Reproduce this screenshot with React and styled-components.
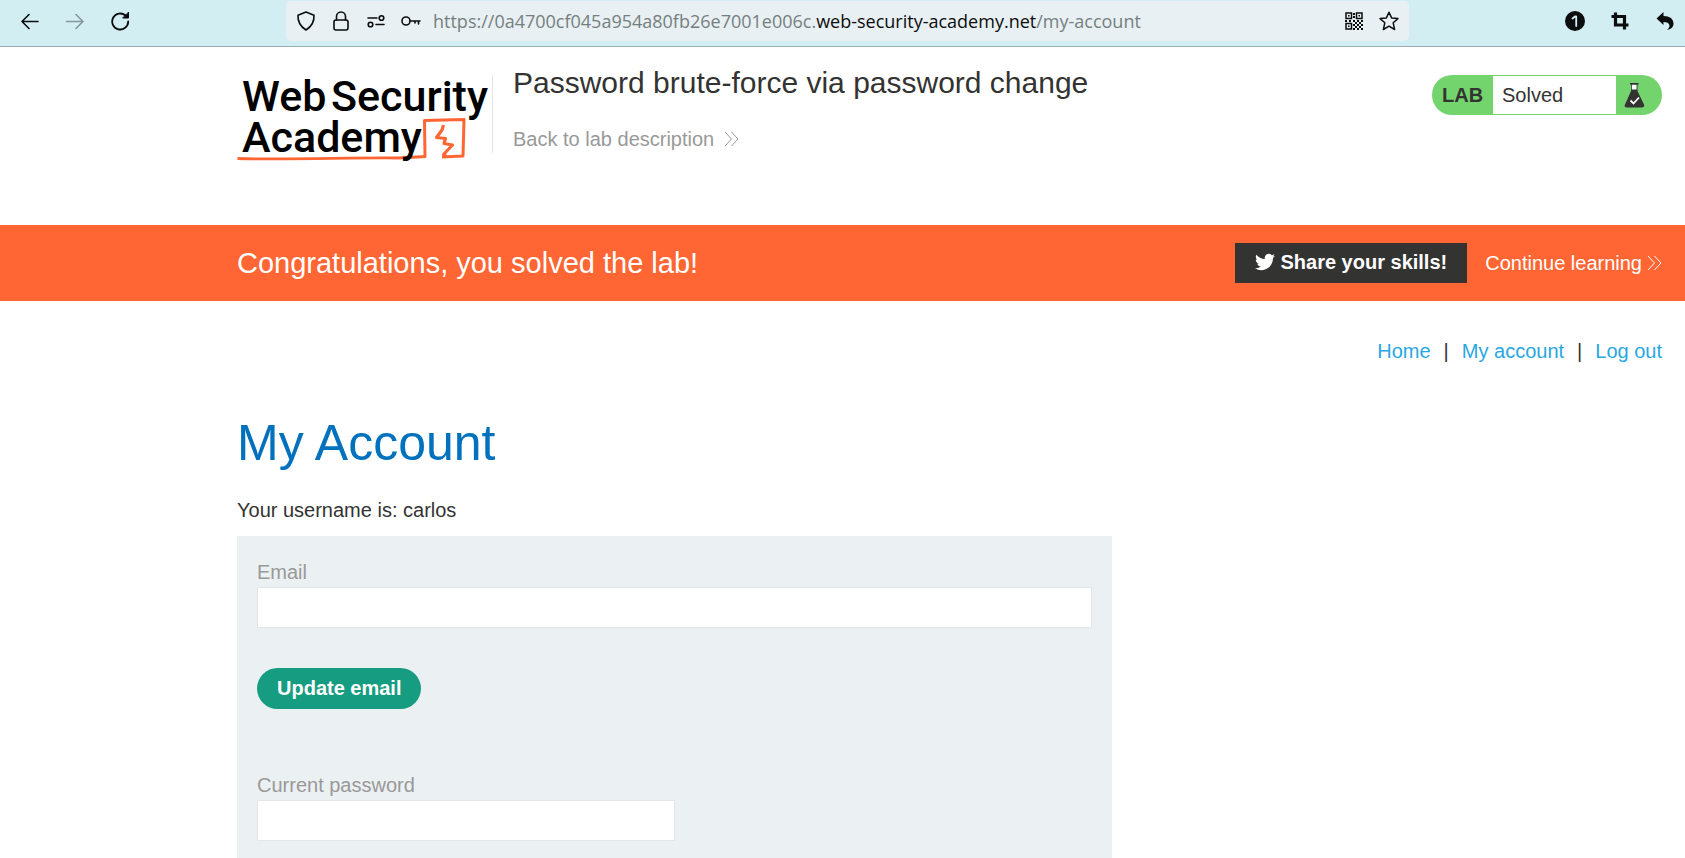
import React from "react";
import styled, { createGlobalStyle } from "styled-components";

const GlobalStyle = createGlobalStyle`
  *, *::before, *::after { box-sizing: border-box; }
  body {
    margin: 0;
    background: #fff;
    color: #333332;
    font-family: "Liberation Sans", Arial, sans-serif;
    font-size: 20px;
    line-height: 24px;
  }
`;

const Page = styled.div`
  display: flex;
  flex-direction: column;
  min-height: 100vh;
`;

/* Browser chrome */
const Toolbar = styled.header`
  display: flex;
  align-items: center;
  gap: 156px;
  height: 47px;
  padding: 0 10px 4px 20px;
  background: #d2eef3;
  border-bottom: 1px solid #9badb3;
`;

const ToolGroup = styled.div`
  display: flex;
  align-items: center;
  gap: ${(p) => (p.$tight ? "15px" : "25px")};
`;

const IconButton = styled.button`
  display: block;
  width: 20px;
  height: 20px;
  padding: 0;
  border: 0;
  background: none;
  color: ${(p) => (p.disabled ? "#84979d" : "#0b0d0e")};

  svg { display: block; }
`;

const AddressBar = styled.div`
  flex: 1;
  min-width: 0;
  display: flex;
  align-items: center;
  gap: 12px;
  height: 40px;
  padding: 0 10px;
  border-radius: 5px;
  background: #e9f0f3;
`;

const Address = styled.div`
  flex: 1;
  min-width: 0;
  overflow: hidden;
  white-space: nowrap;
  font-family: "Open Sans", "Noto Sans", sans-serif;
  font-size: 18px;
  color: #74807f;

  b { font-weight: 400; color: #0b0d0e; }
`;

/* Page sections */
const Section = styled.section`
  padding: 0 23px 0 237px;
`;

const LabHeader = styled(Section)`
  display: flex;
  align-items: flex-start;
  height: 178px;
  padding-top: 20px;
`;

const LogoLink = styled.a`
  display: block;
  width: 255px;
  height: 100px;
  svg { display: block; }
`;

const TitleBlock = styled.div`
  flex: 1;
  margin-top: 8px;
  padding-left: 20px;
  height: 78px;
  border-left: 1px solid #e4e4e4;
`;

const LabTitle = styled.h2`
  margin: -8px 0 0;
  font-size: 30px;
  font-weight: 400;
  line-height: 32px;
`;

const MoreLink = styled.a`
  display: inline-flex;
  align-items: center;
  gap: ${(p) => (p.$light ? "5px" : "10px")};
  color: ${(p) => (p.$light ? "#fff" : "#999")};
  text-decoration: none;
`;

const BackRow = styled.div`
  margin-top: 28px;
`;

const Status = styled.div`
  display: flex;
  width: 230px;
  height: 40px;
  margin-top: 8px;
  border-radius: 20px;
  background: #73d46e;
  line-height: 40px;
  overflow: hidden;
`;

const StatusTag = styled.strong`
  width: 61px;
  padding-left: 10px;
`;

const StatusText = styled.span`
  flex: 1;
  margin: 1px 0;
  padding-left: 9px;
  background: #fff;
  line-height: 38px;
`;

const StatusIcon = styled.span`
  width: 46px;
  padding: 8px;
  svg { display: block; }
`;

const Banner = styled(Section)`
  display: flex;
  align-items: center;
  gap: 18px;
  height: 76px;
  background: #ff6633;
  color: #fff;
`;

const BannerText = styled.p`
  flex: 1;
  margin: 0;
  font-size: 29px;
  line-height: 32px;
`;

const ShareButton = styled.button`
  display: flex;
  align-items: center;
  gap: 5px;
  height: 40px;
  padding: 0 20px 2px;
  border: 0;
  background: #333332;
  color: #fff;
  font: bold 20px/24px "Liberation Sans", Arial, sans-serif;
`;

const Main = styled.main`
  flex: 1;
  display: flex;
  flex-direction: column;
  padding: 38px 23px 0 237px;
`;

const Nav = styled.nav`
  display: flex;
  justify-content: flex-end;
  gap: 13px;

  a { color: #29a7e1; text-decoration: none; }
`;

const Heading = styled.h1`
  margin: 50px 0 0;
  color: #0071bc;
  font-size: 50px;
  font-weight: 400;
  line-height: 60px;
`;

const Username = styled.p`
  margin: 25px 0 14px;
`;

const Panel = styled.div`
  flex: 1;
  display: flex;
  flex-direction: column;
  gap: 64px;
  max-width: 875px;
  padding: 24px 20px 17px;
  background: #ebf0f2;
`;

const Form = styled.form`
  display: flex;
  flex-direction: column;
  align-items: flex-start;
`;

const Label = styled.label`
  margin-bottom: 3px;
  color: #999;
`;

const Input = styled.input`
  width: ${(p) => (p.$half ? "50%" : "100%")};
  height: 41px;
  padding: 0 10px;
  border: 1px solid #e4e6e6;
  border-radius: 0;
  background: #fff;
  font: inherit;
`;

const SubmitButton = styled.button`
  height: 41px;
  margin-top: 40px;
  padding: 0 20px 2px;
  border: 0;
  border-radius: 21px;
  background: #169c80;
  color: #fff;
  font: bold 20px/24px "Liberation Sans", Arial, sans-serif;
`;

const Icon = ({ children, fill = "none", width = 2 }) => (
  <svg width="20" height="20" viewBox="0 0 20 20" fill={fill} aria-hidden="true"
    stroke={fill === "none" ? "currentColor" : "none"} strokeWidth={width}
    strokeLinecap="round" strokeLinejoin="round">{children}</svg>
);

const Chevrons = () => (
  <svg width="15" height="16" viewBox="0 0 15 16" fill="none" stroke="currentColor" strokeWidth="1" aria-hidden="true">
    <path d="M1 1l6.500 7L1 15M7.500 1l6.500 7-6.500 7" />
  </svg>
);

const Logo = () => (
  <svg width="255" height="100" viewBox="237 67 255 100" role="img" aria-label="Web Security Academy">
    <g fill="none" stroke="#ff6633" strokeLinejoin="round">
      <path d="M425 157L424.500 120.500L464 119.500L463 156L442 157" strokeWidth="3" />
      <path d="M443.500 125L442 130L436.500 137.500L445.500 138.500L444 143.500L452.500 145L443.500 154.500L446 156" strokeWidth="3.200" />
      <path d="M237.500 158.500C290 160 350 157.500 398 158L426 156.500" strokeWidth="2.800" />
    </g>
    <g fill="#000" fontFamily="Roboto, sans-serif" fontSize="43" fontWeight="500">
      <text x="242" y="111">Web</text>
      <text x="331" y="111">Security</text>
      <text x="242" y="152">Academy</text>
    </g>
  </svg>
);

const Flask = () => (
  <svg width="21" height="25" viewBox="0 0 21 25" aria-hidden="true">
    <path d="M7 1h6.500v7L20 21.500Q21 24.500 18 24.500H3Q-.5 24.500 1 21.500L7 8z" fill="#333332" />
    <path d="M7.800 1.500h4.800v5H7.800z" fill="#fff" />
    <path d="M6 .7h8.500" stroke="#333332" strokeWidth="1.400" />
    <path d="M6.500 17.500l3 3L15 14.500" fill="none" stroke="#fff" strokeWidth="1.800" />
  </svg>
);

const Bird = () => (
  <svg width="20" height="20" viewBox="0 0 24 24" fill="currentColor" aria-hidden="true">
    <path d="M23.950 4.570a10 10 0 0 1-2.820.770 4.960 4.960 0 0 0 2.160-2.720c-.950.550-2 .950-3.130 1.180a4.920 4.920 0 0 0-8.380 4.480C7.690 8.090 4.070 6.130 1.640 3.160a4.820 4.820 0 0 0-.670 2.480c0 1.710.870 3.210 2.190 4.090a4.900 4.900 0 0 1-2.230-.610v.060c0 2.390 1.700 4.380 3.950 4.830a5 5 0 0 1-2.210.080 4.940 4.940 0 0 0 4.600 3.420A9.870 9.870 0 0 1 0 19.540a13.990 13.990 0 0 0 7.550 2.210c9.050 0 14-7.500 14-13.990 0-.210 0-.420-.020-.630a9.940 9.940 0 0 0 2.460-2.550z" />
  </svg>
);

const QR_DOTS = ["11 11", "15 11", "13 13", "17 13", "11 15", "15 15", "13 17", "17 17", "9 9", "5 9", "1 9", "9 2", "9 5", "13 9", "17 9", "9 13", "9 17"];

export default function App() {
  return (
    <Page>
      <GlobalStyle />
      <Toolbar>
        <ToolGroup>
          <IconButton aria-label="Back"><Icon width={1.6}><path d="M18 10.500H2M9 3.500L2 10.500l7 7" /></Icon></IconButton>
          <IconButton aria-label="Forward" disabled><Icon width={1.600}><path d="M1.500 10.500h16.500M11 3.500l7 7-7 7" /></Icon></IconButton>
          <IconButton aria-label="Reload">
            <Icon width={1.800}>
              <path d="M18.200 10.500A8 8 0 1 1 15.500 4.500" />
              <path d="M18.500 1.500v5.500H13z" fill="currentColor" strokeWidth="1" />
            </Icon>
          </IconButton>
        </ToolGroup>
        <AddressBar>
          <ToolGroup $tight>
            <IconButton aria-label="Tracking protection"><Icon width={1.600}><path d="M10 1L18 4.200Q18.600 13.500 10 19Q1.400 13.500 2 4.200z" /></Icon></IconButton>
            <IconButton aria-label="Connection secure"><Icon width={1.600}><rect x="3" y="9" width="14" height="10" rx="2" /><path d="M5.500 9V5.500a4.500 4.500 0 0 1 9 0V9" /></Icon></IconButton>
            <IconButton aria-label="Permissions"><Icon width={1.600}><path d="M2 7h9M10 13.500h8" /><circle cx="15.500" cy="7" r="2.300" /><circle cx="4.500" cy="13.500" r="2.300" /></Icon></IconButton>
            <IconButton aria-label="Saved password"><Icon width={1.600}><circle cx="5" cy="10" r="4" /><path d="M9 10h10M17.500 10v3M14 10v2" /></Icon></IconButton>
          </ToolGroup>
          <Address>https://0a4700cf045a954a80fb26e7001e006c.<b>web-security-academy.net</b>/my-account</Address>
          <ToolGroup $tight>
            <IconButton aria-label="QR code">
              <Icon width={1.500}>
                <g strokeLinejoin="miter">
                  <path d="M2 2h5.500v5.500H2zM12.500 2H18v5.500h-5.500zM2 12.500h5.500V18H2z" />
                  <path d="M4 4h1.500v1.500H4zM14.500 4H16v1.500h-1.500zM4 14.500h1.500V16H4z" fill="currentColor" stroke="none" />
                </g>
                {QR_DOTS.map((d) => <path key={d} d={`M${d}h2v2h-2z`} fill="currentColor" stroke="none" />)}
              </Icon>
            </IconButton>
            <IconButton aria-label="Bookmark"><Icon width={1.500}><path d="M10 1.200l2.600 5.700 6.300.700-4.700 4.200 1.400 6.700L10 15.200l-5.600 3.300 1.400-6.700L1.100 7.600l6.300-.700z" /></Icon></IconButton>
          </ToolGroup>
        </AddressBar>
        <ToolGroup>
          <IconButton aria-label="Notifications">
            <Icon fill="currentColor"><circle cx="10" cy="10" r="10" /><path d="M7.500 7.500L10 5.500h1.200V15" stroke="#d2eef3" strokeWidth="1.800" fill="none" /></Icon>
          </IconButton>
          <IconButton aria-label="Screenshot">
            <Icon width={3.200}><path d="M5.500 1.500v12.500h13M1.500 5.500h13v13" strokeLinecap="butt" strokeLinejoin="miter" /></Icon>
          </IconButton>
          <IconButton aria-label="Undo">
            <Icon fill="currentColor"><path d="M1.500 7.500L8.500 1v4C15 5 18.500 8 18.500 12.500c0 3-1.500 5.500-6.500 6.500 4-3 3.500-8-3.500-8V14z" /></Icon>
          </IconButton>
        </ToolGroup>
      </Toolbar>

      <LabHeader>
        <LogoLink href="#"><Logo /></LogoLink>
        <TitleBlock>
          <LabTitle>Password brute-force via password change</LabTitle>
          <BackRow><MoreLink href="#">Back to lab description <Chevrons /></MoreLink></BackRow>
        </TitleBlock>
        <Status>
          <StatusTag>LAB</StatusTag>
          <StatusText>Solved</StatusText>
          <StatusIcon><Flask /></StatusIcon>
        </Status>
      </LabHeader>

      <Banner>
        <BannerText>Congratulations, you solved the lab!</BannerText>
        <ShareButton><Bird />Share your skills!</ShareButton>
        <MoreLink $light href="#">Continue learning <Chevrons /></MoreLink>
      </Banner>

      <Main>
        <Nav>
          <a href="#">Home</a><span>|</span>
          <a href="#">My account</a><span>|</span>
          <a href="#">Log out</a>
        </Nav>
        <Heading>My Account</Heading>
        <Username>Your username is: carlos</Username>
        <Panel>
          <Form>
            <Label htmlFor="email">Email</Label>
            <Input id="email" type="email" />
            <SubmitButton type="button">Update email</SubmitButton>
          </Form>
          <Form>
            <Label htmlFor="current-password">Current password</Label>
            <Input id="current-password" type="password" $half />
          </Form>
        </Panel>
      </Main>
    </Page>
  );
}
